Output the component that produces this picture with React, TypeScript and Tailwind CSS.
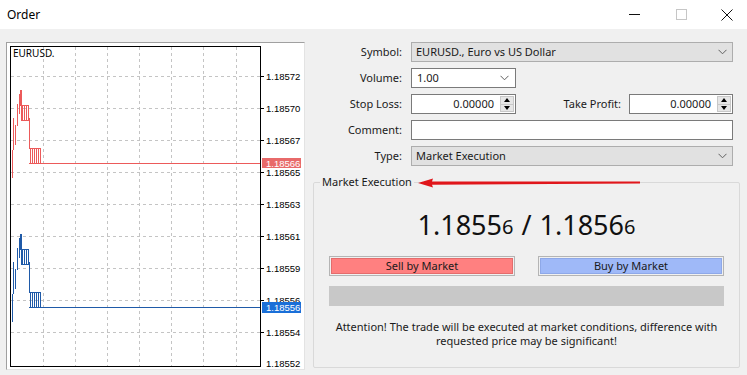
import React from 'react';

const font = { fontFamily: '"Noto Sans", "Open Sans", sans-serif' };

const gridX = [43, 75, 107, 139, 171, 203, 236];
const gridY = [76, 108, 140, 172, 204, 236, 268, 300, 332];
const axis: [number, string][] = [
  [76, '1.18572'],
  [108, '1.18570'],
  [140, '1.18567'],
  [172, '1.18565'],
  [204, '1.18563'],
  [236, '1.18561'],
  [268, '1.18559'],
  [300, '1.18556'],
  [332, '1.18554'],
  [363, '1.18552'],
];

// tick history drawn as vertical strokes; dy shifts it for the bid line
function tickPath(dy: number) {
  const v = (x: number, a: number, b: number) => `M${x + 0.5} ${a + dy} V${b + dy} `;
  const h = (y: number, a: number, b: number) => `M${a} ${y + 0.5 + dy} H${b} `;
  let d = '';
  d += v(12, 150, 178);
  d += v(13, 118, 150);
  d += v(15, 125, 145);
  d += v(17, 104, 126);
  d += v(19, 94, 114);
  d += v(20, 90, 106);
  d += v(21, 90, 120);
  [22, 24, 26, 28].forEach((x) => (d += v(x, 105, 120)));
  d += h(105, 21, 29) + h(120, 21, 29);
  d += v(29, 118, 149);
  [30, 32, 34, 36, 38, 40].forEach((x) => (d += v(x, 148, 163)));
  d += h(148, 29, 41) + h(163, 29, 260);
  return d;
}

function Chart() {
  return (
    <div className="h-[328px] w-[299px] border border-t-[#a0a0a0] border-l-[#a0a0a0] border-r-[#e3e3e3] border-b-[#e3e3e3] bg-white">
      <svg width="297" height="326" viewBox="7 43 297 326" style={{ display: 'block' }}>
        {gridX.map((x) => (
          <line key={x} x1={x + 0.5} y1={47} x2={x + 0.5} y2={366} stroke="#c4c4c4" strokeDasharray="3 3" />
        ))}
        {gridY.map((y) => (
          <g key={y}>
            <line x1={11} y1={y + 0.5} x2={260} y2={y + 0.5} stroke="#c4c4c4" strokeDasharray="3 3" />
            <line x1={260} y1={y + 0.5} x2={264} y2={y + 0.5} stroke="#000" />
          </g>
        ))}
        <rect x={10.5} y={46.5} width={250} height={320} fill="none" stroke="#000" />
        <text x={13} y={57} fontSize="10" fill="#000" fontFamily='"Noto Sans", sans-serif'>
          EURUSD.
        </text>
        {axis.map(([y, t]) => (
          <text key={t} x={266} y={y + 4} fontSize="9.5" fill="#000" fontFamily='"Liberation Sans", sans-serif'>
            {t}
          </text>
        ))}
        <path d={tickPath(0)} fill="none" stroke="#ec5a5a" strokeWidth="1" shapeRendering="crispEdges" />
        <path d={tickPath(144)} fill="none" stroke="#1f5aa8" strokeWidth="1" shapeRendering="crispEdges" />
        <rect x={262} y={158} width={39} height={10} fill="#e86a6a" />
        <text x={266} y={166.5} fontSize="9.5" fill="#fff" fontFamily='"Liberation Sans", sans-serif'>
          1.18566
        </text>
        <rect x={262} y={302} width={39} height={11} fill="#1a6fd8" />
        <text x={266} y={310.5} fontSize="9.5" fill="#fff" fontFamily='"Liberation Sans", sans-serif'>
          1.18556
        </text>
      </svg>
    </div>
  );
}

function Chevron() {
  return (
    <svg width="9" height="6" viewBox="0 0 9 6" className="shrink-0">
      <path d="M0.5 0.8 L4.5 4.8 L8.5 0.8" fill="none" stroke="#606060" strokeWidth="1" />
    </svg>
  );
}

function Spinner() {
  return (
    <div className="mr-[1px] flex h-[16px] w-[14px] flex-col border border-[#c8c8c8] bg-[#e6e6e6]">
      <div className="flex flex-1 items-center justify-center border-b border-[#c8c8c8]">
        <svg width="6" height="4" viewBox="0 0 6 4">
          <path d="M0 4 L3 0 L6 4 Z" fill="#000" />
        </svg>
      </div>
      <div className="flex flex-1 items-center justify-center">
        <svg width="6" height="4" viewBox="0 0 6 4">
          <path d="M0 0 L3 4 L6 0 Z" fill="#000" />
        </svg>
      </div>
    </div>
  );
}

function Label({ children }: { children: React.ReactNode }) {
  return <div className="w-[97px] shrink-0 text-right">{children}</div>;
}

export default function App() {
  return (
    <div className="flex h-[375px] w-[747px] flex-col overflow-hidden bg-[#f0f0f0] text-[11px] text-[#1a1a1a]" style={font}>
      <div className="flex h-[29px] shrink-0 items-center bg-white pl-[7px]">
        <span className="text-[12px] text-black">Order</span>
        <div className="ml-auto flex items-center">
          <svg width="11" height="11" viewBox="0 0 11 11" className="mr-[36px]">
            <line x1="0" y1="5.5" x2="11" y2="5.5" stroke="#111" />
          </svg>
          <svg width="11" height="11" viewBox="0 0 11 11" className="mr-[34px]">
            <rect x="0.5" y="0.5" width="10" height="10" fill="none" stroke="#c6c6c6" />
          </svg>
          <svg width="12" height="12" viewBox="0 0 12 12" className="mr-[14px]">
            <path d="M0.5 0.5 L11.5 11.5 M11.5 0.5 L0.5 11.5" stroke="#111" strokeWidth="1" />
          </svg>
        </div>
      </div>

      <div className="flex flex-1 pl-[6px] pt-[13px]">
        <Chart />

        <div className="relative flex flex-1 flex-col">
          <div className="flex flex-col gap-[6px] pr-[14px]">
            <div className="flex h-[20px] items-center">
              <Label>Symbol:</Label>
              <div className="ml-[9px] flex h-full flex-1 items-center justify-between border border-[#adadad] bg-[#e1e1e1] pl-[4px] pr-[5px]">
                <span>EURUSD., Euro vs US Dollar</span>
                <Chevron />
              </div>
            </div>
            <div className="flex h-[20px] items-center">
              <Label>Volume:</Label>
              <div className="ml-[9px] flex h-full w-[105px] items-center justify-between border border-[#7a7a7a] bg-white pl-[5px] pr-[6px]">
                <span>1.00</span>
                <Chevron />
              </div>
            </div>
            <div className="flex h-[20px] items-center">
              <Label>Stop Loss:</Label>
              <div className="ml-[9px] flex h-full w-[105px] items-center justify-end gap-[6px] border border-[#7a7a7a] bg-white">
                <span>0.00000</span>
                <Spinner />
              </div>
              <div className="w-[105px] text-right">Take Profit:</div>
              <div className="ml-[8px] flex h-full flex-1 items-center justify-end gap-[6px] border border-[#7a7a7a] bg-white">
                <span>0.00000</span>
                <Spinner />
              </div>
            </div>
            <div className="flex h-[20px] items-center">
              <Label>Comment:</Label>
              <div className="ml-[9px] h-full flex-1 border border-[#7a7a7a] bg-white" />
            </div>
            <div className="flex h-[20px] items-center">
              <Label>Type:</Label>
              <div className="ml-[9px] flex h-full flex-1 items-center justify-between border border-[#adadad] bg-[#e1e1e1] pl-[4px] pr-[5px]">
                <span>Market Execution</span>
                <Chevron />
              </div>
            </div>
          </div>

          <fieldset className="ml-[8px] mr-[7px] mt-[8px] h-[194px] rounded-[2px] border border-[#d9d9d9]">
            <legend className="ml-[6px] px-[2px] leading-[16px]">Market Execution</legend>
            <div className="flex flex-col px-[15px]">
              <div className="mt-[12px] flex h-[36px] items-end justify-center leading-none text-[#111]">
                <span className="text-[27px]">1.1855</span>
                <span className="mb-[1px] text-[20px]">6</span>
                <span className="px-[8px] text-[27px]">/</span>
                <span className="text-[27px]">1.1856</span>
                <span className="mb-[1px] text-[20px]">6</span>
              </div>
              <div className="mt-[18px] flex justify-between">
                <div className="h-[20px] w-[186px] border border-[#b4b4b4] p-[1px]">
                  <div className="flex h-full items-center justify-center border border-[#e46c6c] bg-[#ff8080]">
                    Sell by Market
                  </div>
                </div>
                <div className="h-[20px] w-[186px] border border-[#b4b4b4] p-[1px]">
                  <div className="flex h-full items-center justify-center border border-[#8ea8e8] bg-[#9fb9f8]">
                    Buy by Market
                  </div>
                </div>
              </div>
              <div className="mt-[10px] h-[20px] bg-[#c8c8c8]" />
              <p className="mt-[14px] text-center leading-[14px]">
                <span className="whitespace-nowrap">Attention! The trade will be executed at market conditions, difference with</span>
                <br />
                requested price may be significant!
              </p>
            </div>
          </fieldset>

          {/* annotation arrow drawn over the group box */}
          <svg width="230" height="12" viewBox="0 0 230 12" className="pointer-events-none absolute left-[113px] top-[135px]">
            <path d="M0 6 L15 1.5 L14 4.6 L222 4.5 L222 6.5 L14 7.8 L15 10.5 Z" fill="#e0161b" />
          </svg>
        </div>
      </div>
    </div>
  );
}
